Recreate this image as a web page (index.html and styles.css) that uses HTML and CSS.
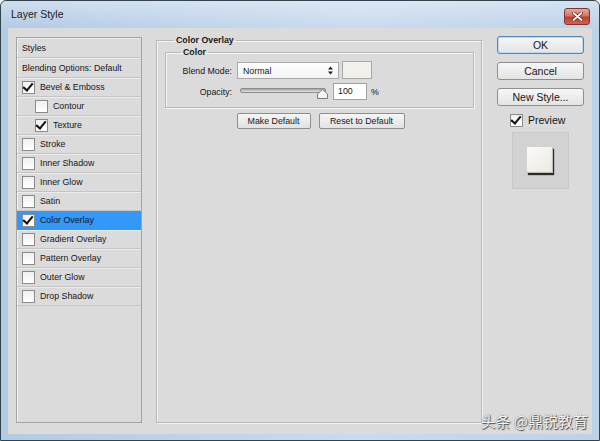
FILE: index.html
```html
<!DOCTYPE html>
<html lang="en">
<head>
    <meta charset="UTF-8">
    <title>Layer Style</title>
    <link rel="stylesheet" href="styles.css">
</head>
<body>

    <div class="window">
        <div class="titlebar">
            <span class="title">Layer Style</span>
            <button class="close">
                <svg width="11" height="9" viewBox="0 0 11 9">
                    <path d="M1.5 1 L9.5 8 M9.5 1 L1.5 8" stroke="#5a1e18" stroke-width="3.2" stroke-linecap="round"/>
                    <path d="M1.5 1 L9.5 8 M9.5 1 L1.5 8" stroke="#fff" stroke-width="1.8" stroke-linecap="round"/>
                </svg>
            </button>
        </div>

        <div class="client">
            <ul class="styles-list">
                <li class="head">Styles</li>
                <li class="head">Blending Options: Default</li>
                <li><span class="check on"></span>Bevel &amp; Emboss</li>
                <li class="sub"><span class="check"></span>Contour</li>
                <li class="sub"><span class="check on"></span>Texture</li>
                <li><span class="check"></span>Stroke</li>
                <li><span class="check"></span>Inner Shadow</li>
                <li><span class="check"></span>Inner Glow</li>
                <li><span class="check"></span>Satin</li>
                <li class="selected"><span class="check on"></span>Color Overlay</li>
                <li><span class="check"></span>Gradient Overlay</li>
                <li><span class="check"></span>Pattern Overlay</li>
                <li><span class="check"></span>Outer Glow</li>
                <li><span class="check"></span>Drop Shadow</li>
            </ul>

            <fieldset class="group">
                <legend>Color Overlay</legend>
                <fieldset class="subgroup">
                    <legend>Color</legend>
                    <div class="row">
                        <span class="label">Blend Mode:</span>
                        <div class="select">
                            <span>Normal</span>
                            <svg width="5" height="9" viewBox="0 0 5 9">
                                <path d="M0 3.5 L2.5 0.5 L5 3.5 Z M0 5.5 L2.5 8.5 L5 5.5 Z" fill="#222"/>
                            </svg>
                        </div>
                        <div class="swatch"></div>
                    </div>
                    <div class="row">
                        <span class="label">Opacity:</span>
                        <div class="slider">
                            <div class="track"></div>
                            <svg class="knob" width="11" height="10" viewBox="0 0 11 10">
                                <path d="M0.5 9.5 L0.5 5 L5.5 0.5 L10.5 5 L10.5 9.5 Z" fill="#f4f4f4" stroke="#7a7a7a"/>
                            </svg>
                        </div>
                        <div class="number">100</div>
                        <span class="unit">%</span>
                    </div>
                </fieldset>
                <div class="defaults">
                    <button class="small-btn make">Make Default</button>
                    <button class="small-btn reset">Reset to Default</button>
                </div>
            </fieldset>

            <div class="actions">
                <button class="btn ok">OK</button>
                <button class="btn">Cancel</button>
                <button class="btn">New Style...</button>
                <div class="preview"><span class="check on"></span>Preview</div>
                <div class="preview-box">
                    <div class="preview-swatch"></div>
                </div>
            </div>

            <div class="watermark">头条 @鼎锐教育</div>
        </div>
    </div>

</body>
</html>
```

FILE: styles.css
```css
body {
    margin: 0;
    padding: 0;
    font-family: "Liberation Sans", Arial, sans-serif;
    color: #151515;
}

.window {
    position: relative;
    width: 600px;
    height: 441px;
    box-sizing: border-box;
    border: 1px solid #34414f;
    border-radius: 6px 6px 0 0;
    background: linear-gradient(to right, #b3cbe4, #c9dbee 60%, #bcd2e9);
    display: flex;
    flex-direction: column;
    overflow: hidden;
}

.titlebar {
    height: 27px;
    display: flex;
    align-items: center;
    justify-content: space-between;
    padding: 0 9px 0 10px;
    background: linear-gradient(to bottom, rgba(255, 255, 255, 0.35), rgba(255, 255, 255, 0));
}

.title {
    font-size: 10.5px;
    color: #1b1b1b;
    margin-top: -1px;
}

.close {
    width: 26px;
    height: 17px;
    margin-top: 3px;
    padding: 0;
    border: 1px solid #7d352d;
    border-radius: 3px;
    background: linear-gradient(to bottom, #e6a89e 0%, #d47466 45%, #c0402f 55%, #d2614f 100%);
    display: flex;
    align-items: center;
    justify-content: center;
}

.client {
    flex: 1;
    margin: 0 7px 6px 7px;
    background-color: #dbdbdb;
    display: flex;
    align-items: stretch;
    padding: 9px 8px 11px 8px;
    font-size: 8.8px;
}

/* left list of styles */
.styles-list {
    list-style: none;
    margin: 0 14px 0 0;
    padding: 0;
    width: 126px;
    box-sizing: border-box;
    border: 1px solid #a3a3a3;
    box-shadow: inset 1px 1px 0 #f2f2f2;
}

.styles-list li {
    height: 19px;
    box-sizing: border-box;
    display: flex;
    align-items: center;
    padding-left: 5px;
    border-bottom: 1px solid #c5c5c5;
    box-shadow: inset 0 1px 0 #ececec;
}

.styles-list li.head {
    height: 20px;
    padding-left: 5px;
}

.styles-list li.sub {
    padding-left: 18px;
}

.styles-list li.selected {
    background-color: #3398fa;
    box-shadow: none;
    border-bottom-color: #3398fa;
}

.check {
    position: relative;
    width: 11px;
    height: 11px;
    flex: none;
    margin-right: 5px;
    border: 1px solid #8b8b8b;
    background: linear-gradient(to bottom, #f0f0f0, #ffffff);
}

.check.on::after {
    content: "";
    position: absolute;
    left: 2px;
    top: -1px;
    width: 4px;
    height: 8px;
    border: solid #111;
    border-width: 0 2px 2px 0;
    transform: rotate(40deg);
}

/* middle group */
.group {
    margin: -3px 0 0 0;
    padding: 0 7px 0 8px;
    width: 326px;
    box-sizing: border-box;
    border: 1px solid #b9b9b9;
    box-shadow: 1px 1px 0 #f3f3f3, inset 1px 1px 0 #f3f3f3;
}

.group legend {
    font-weight: bold;
    padding: 0 2px;
    margin-left: 9px;
    line-height: 13px;
}

.subgroup {
    margin: -1px 0 0 0;
    padding: 4px 4px 7px 4px;
    border: 1px solid #b9b9b9;
    box-shadow: 1px 1px 0 #f3f3f3, inset 1px 1px 0 #f3f3f3;
}

.subgroup legend {
    font-weight: bold;
    padding: 0 2px;
    margin-left: 11px;
    line-height: 12px;
}

.row {
    display: flex;
    align-items: center;
    height: 17px;
    margin-bottom: 4px;
}

.row:last-child {
    margin-bottom: 0;
}

.label {
    width: 62px;
    text-align: right;
    margin-right: 5px;
}

.select {
    width: 102px;
    height: 17px;
    box-sizing: border-box;
    border: 1px solid #a9a9a9;
    background: linear-gradient(to bottom, #ffffff, #f3f3f3);
    display: flex;
    align-items: center;
    justify-content: space-between;
    padding: 0 5px 0 5px;
}

.swatch {
    width: 30px;
    height: 18px;
    margin-left: 3px;
    margin-top: -1px;
    box-sizing: border-box;
    border: 1px solid #a9a9a9;
    background-color: #f2f0eb;
}

.slider {
    position: relative;
    width: 88px;
    height: 17px;
    margin-left: 3px;
}

.track {
    margin-top: 5px;
    width: 84px;
    height: 3px;
    border-radius: 2px;
    border: 1px solid #8c8c8c;
    background: linear-gradient(to bottom, #a0a0a0, #e6e6e6);
}

.knob {
    position: absolute;
    left: 77px;
    top: 6px;
}

.number {
    width: 34px;
    height: 17px;
    margin-left: 5px;
    box-sizing: border-box;
    border: 1px solid #a0a0a0;
    background-color: #fff;
    padding-left: 4px;
    line-height: 15px;
}

.unit {
    margin-left: 4px;
}

.defaults {
    display: flex;
    justify-content: center;
    gap: 8px;
    margin-top: 5px;
    margin-left: 2px;
}

.small-btn {
    height: 16px;
    padding: 0;
    font-family: inherit;
    font-size: 8.8px;
    color: #151515;
    border: 1px solid #8e8e8e;
    border-radius: 2px;
    background: linear-gradient(to bottom, #f5f5f5, #e2e2e2);
}

.small-btn.make {
    width: 74px;
}

.small-btn.reset {
    width: 86px;
}

/* right column */
.actions {
    width: 87px;
    margin-left: 15px;
    margin-top: -1px;
    display: flex;
    flex-direction: column;
    font-size: 10.5px;
}

.btn {
    height: 18px;
    margin-bottom: 8px;
    padding: 0;
    font-family: inherit;
    font-size: 10.5px;
    color: #151515;
    border: 1px solid #8f8f8f;
    border-radius: 3px;
    background: linear-gradient(to bottom, #f6f6f6, #e4e4e4);
}

.btn.ok {
    border-color: #4f87b8;
    box-shadow: inset 0 0 0 1px #b9dcf4;
}

.preview {
    display: flex;
    align-items: center;
    margin: -1px 0 5px 13px;
    height: 14px;
}

.preview .check {
    margin-right: 5px;
}

.preview-box {
    width: 57px;
    height: 57px;
    margin-left: 15px;
    box-sizing: border-box;
    border: 1px solid #c8c8c8;
    background-color: #d2d2d2;
    display: flex;
    align-items: center;
    justify-content: center;
}

.preview-swatch {
    width: 26px;
    height: 26px;
    margin: -2px 2px 0 0;
    background: linear-gradient(135deg, #fbfaf7, #ece9e3);
    box-shadow: 1px 2px 1px #2c2c2c, inset -1px -1px 1px #b9b6b0;
}

.watermark {
    position: absolute;
    right: 11px;
    bottom: 9px;
    font-family: "Noto Sans CJK SC", sans-serif;
    font-size: 15px;
    color: #f3f3f3;
    text-shadow: 1px 1px 1px #4a4a4a, 0 0 1px #666;
}
```
